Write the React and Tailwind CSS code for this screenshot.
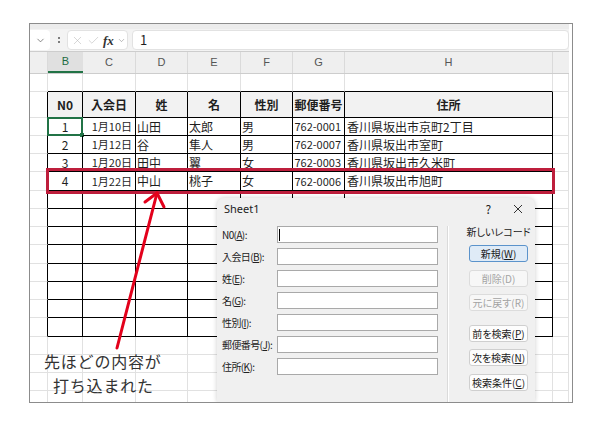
import React from "react";
import { ChevronDown, X, Check } from "lucide-react";

const colW = ["w-[18px]", "w-[35px]", "w-[53px]", "w-[52px]", "w-[53px]", "w-[52px]", "w-[52px]", "w-[208px]", "w-[16px]"];
const letters = ["", "B", "C", "D", "E", "F", "G", "H", ""];
const rowH = { 12: "h-[12px]", 18: "h-[18px]", 19: "h-[19px]", 26: "h-[26px]" };
const rowHeights = [18, 26, 18, 18, 18, 19, 18, 18, 18, 19, 18, 18, 18, 19, 18, 18, 18, 12];

const headers = ["N0", "入会日", "姓", "名", "性別", "郵便番号", "住所"];
const records = [
  ["1", "1月10日", "山田", "太郎", "男", "762-0001", "香川県坂出市京町2丁目"],
  ["2", "1月12日", "谷", "隼人", "男", "762-0007", "香川県坂出市室町"],
  ["3", "1月20日", "田中", "翼", "女", "762-0003", "香川県坂出市久米町"],
  ["4", "1月22日", "中山", "桃子", "女", "762-0006", "香川県坂出市旭町"],
];

// alignment of the data cells, B..H
const align = [
  "justify-center",
  "justify-end pr-[3px] text-[11px]",
  "justify-start pl-[1px]",
  "justify-start pl-[1px]",
  "justify-start pl-[1px]",
  "justify-end pr-[3px] text-[11px]",
  "justify-start pl-[2px]",
];

const Cell = ({ r, c }) => {
  const inTable = r >= 1 && r <= 13;
  const right = inTable && c <= 7 ? "border-r-black" : "border-r-[#e1e1e1]";
  const bottom = c >= 1 && c <= 7 && r <= 13 ? "border-b-black" : "border-b-[#e1e1e1]";
  const isHead = r === 1 && c >= 1 && c <= 7;
  const rec = r >= 2 && r <= 5 && c >= 1 && c <= 7 ? records[r - 2][c - 1] : null;

  return (
    <div
      className={`relative flex shrink-0 items-center border-r border-b ${colW[c]} ${right} ${bottom} ${
        isHead ? "justify-center bg-[#f2f2f2] font-bold" : rec ? align[c - 1] : ""
      }`}
    >
      {isHead && headers[c - 1]}
      {rec && <span className="whitespace-nowrap leading-none">{rec}</span>}
      {r === 2 && c === 1 && (
        <div className="absolute -left-[1px] -top-[1px] h-[19px] w-[36px] border-2 border-[#217346]">
          <div className="absolute -bottom-[3px] -right-[3px] h-[4px] w-[4px] bg-[#217346]" />
        </div>
      )}
    </div>
  );
};

const fields = [
  ["N0", "A"],
  ["入会日", "B"],
  ["姓", "E"],
  ["名", "G"],
  ["性別", "I"],
  ["郵便番号", "J"],
  ["住所", "K"],
];

const Btn = ({ children, className = "", variant }) => (
  <div
    className={`flex h-[17px] w-[59px] shrink-0 items-center justify-center whitespace-nowrap rounded-[3px] border text-[10px] leading-none ${
      variant === "primary"
        ? "border-[#5b93cb] bg-[#dfebf7] text-[#1a1a1a]"
        : variant === "off"
        ? "border-[#dcdcdc] bg-[#f7f7f7] text-[#a3a3a3]"
        : "border-[#cfcfcf] bg-[#fdfdfd] text-[#1a1a1a]"
    } ${className}`}
  >
    {children}
  </div>
);

const Dialog = () => (
  <div className="absolute bottom-0 left-[187px] top-[174px] w-[318px] rounded-t-[7px] bg-[#f0f0f0] text-[10px] text-[#222] shadow-[0_0_5px_rgba(0,0,0,0.2)] [font-feature-settings:'palt']">
    <div className="flex h-[22px] items-center pl-[7px]">
      <span className="font-['Noto_Sans',sans-serif] text-[11px]">Sheet1</span>
      <span className="ml-[226px] text-[12px]">?</span>
      <svg className="ml-[22px]" width="10" height="10" viewBox="0 0 10 10">
        <path d="M1 1L9 9M9 1L1 9" stroke="#333" strokeWidth="1" />
      </svg>
    </div>
    <div className="mt-[6px] flex h-[177px]">
      <div className="flex w-[231px] flex-col gap-[5px]">
        {fields.map(([pre, k], i) => (
          <div key={k} className="flex h-[17px] items-center">
            <div className="w-[60px] whitespace-nowrap pl-[5px] leading-none tracking-[-0.6px]">
              {pre}(<u>{k}</u>):
            </div>
            <div className="flex h-[17px] w-[161px] items-center border border-[#a9a9a9] bg-white pl-[1px]">
              {i === 0 && <div className="h-[12px] w-px bg-black" />}
            </div>
          </div>
        ))}
      </div>
      <div className="flex-1 border-l border-l-white pl-[20px] shadow-[-1px_0_0_#dadada]">
        <div className="flex w-[59px] flex-col items-center">
          <div className="h-[12px] whitespace-nowrap leading-[12px]">新しいレコード</div>
          <Btn variant="primary" className="mt-[7px]">
            新規(<u>W</u>)
          </Btn>
          <Btn variant="off" className="mt-[8px]">
            削除(D)
          </Btn>
          <Btn variant="off" className="mt-[7px]">
            元に戻す(R)
          </Btn>
          <Btn className="mt-[14px]">
            前を検索(<u>P</u>)
          </Btn>
          <Btn className="mt-[7px]">
            次を検索(<u>N</u>)
          </Btn>
          <Btn className="mt-[8px]">
            検索条件(<u>C</u>)
          </Btn>
        </div>
      </div>
    </div>
  </div>
);

export default function App() {
  return (
    <div className="h-[430px] w-[600px] bg-white pl-[29px] pt-[23px] font-['Noto_Sans_CJK_JP',sans-serif] text-[12px] text-[#1f1f1f]">
      <div className="relative h-[380px] w-[544px] overflow-hidden border border-[#8c8c8c] bg-white">
        <div className="h-[5px] w-[539px] bg-[#ececec]" />
        {/* formula bar */}
        <div className="flex h-[22px] w-[539px] items-center bg-[#f3f3f3] py-[1px]">
          <div className="flex h-full w-[20px] items-center justify-center rounded-r-[4px] bg-white">
            <ChevronDown size={11} strokeWidth={1.5} color="#555" />
          </div>
          <div className="flex w-[17px] flex-col items-center gap-[2px]">
            <div className="h-[2px] w-[2px] rounded-full bg-[#555]" />
            <div className="h-[2px] w-[2px] rounded-full bg-[#555]" />
          </div>
          <div className="flex h-full w-[61px] items-center gap-[3px] rounded-[4px] border border-[#e2e2e2] bg-white pl-[3px]">
            <X size={13} strokeWidth={1} color="#b5b5b5" />
            <Check size={13} strokeWidth={1} color="#b5b5b5" />
            <span className="font-['Liberation_Serif',serif] text-[13px] font-bold italic leading-none text-[#333]">fx</span>
            <ChevronDown size={9} strokeWidth={1.5} color="#888" />
          </div>
          <div className="ml-[4px] flex h-full flex-1 items-center rounded-[4px] border border-[#e2e2e2] bg-white pl-[7px] text-[13px]">
            1
          </div>
        </div>
        {/* column headers */}
        <div className="flex h-[23px] w-[539px] border-y border-[#cdcdcd] bg-[#efefef] font-['Liberation_Sans',sans-serif] text-[11px] text-[#555]">
          {letters.map((l, c) => (
            <div
              key={c}
              className={`flex shrink-0 items-center justify-center ${colW[c]} ${
                c === 1
                  ? "border-b-2 border-b-[#217346] bg-[#e0e0e0] text-[#1d6b41]"
                  : c < 8
                  ? "border-r border-r-[#dadada]"
                  : ""
              }`}
            >
              {l}
            </div>
          ))}
        </div>
        {/* sheet */}
        {rowHeights.map((h, r) => (
          <div key={r} className={`flex ${rowH[h]}`}>
            {colW.map((_, c) => (
              <Cell key={c} r={r} c={c} />
            ))}
          </div>
        ))}

        {/* highlighted record */}
        <div className="absolute left-[16px] top-[144px] h-[26px] w-[509px] border-[3px] border-[#be1e3c]" />

        <Dialog />

        {/* arrow */}
        <svg className="pointer-events-none absolute left-0 top-0" width="542" height="378">
          <path d="M87 324L127 169" stroke="#e3001b" strokeWidth="3" strokeLinecap="round" fill="none" />
          <path d="M115 178L127 169L134 183" stroke="#e3001b" strokeWidth="3" strokeLinecap="round" strokeLinejoin="round" fill="none" />
        </svg>
        <div className="absolute left-[14px] top-[325px] flex flex-col text-[16px] leading-[24px] tracking-[0.8px] text-[#333]">
          <span>先ほどの内容が</span>
          <span className="pl-[9px]">打ち込まれた</span>
        </div>
      </div>
    </div>
  );
}
